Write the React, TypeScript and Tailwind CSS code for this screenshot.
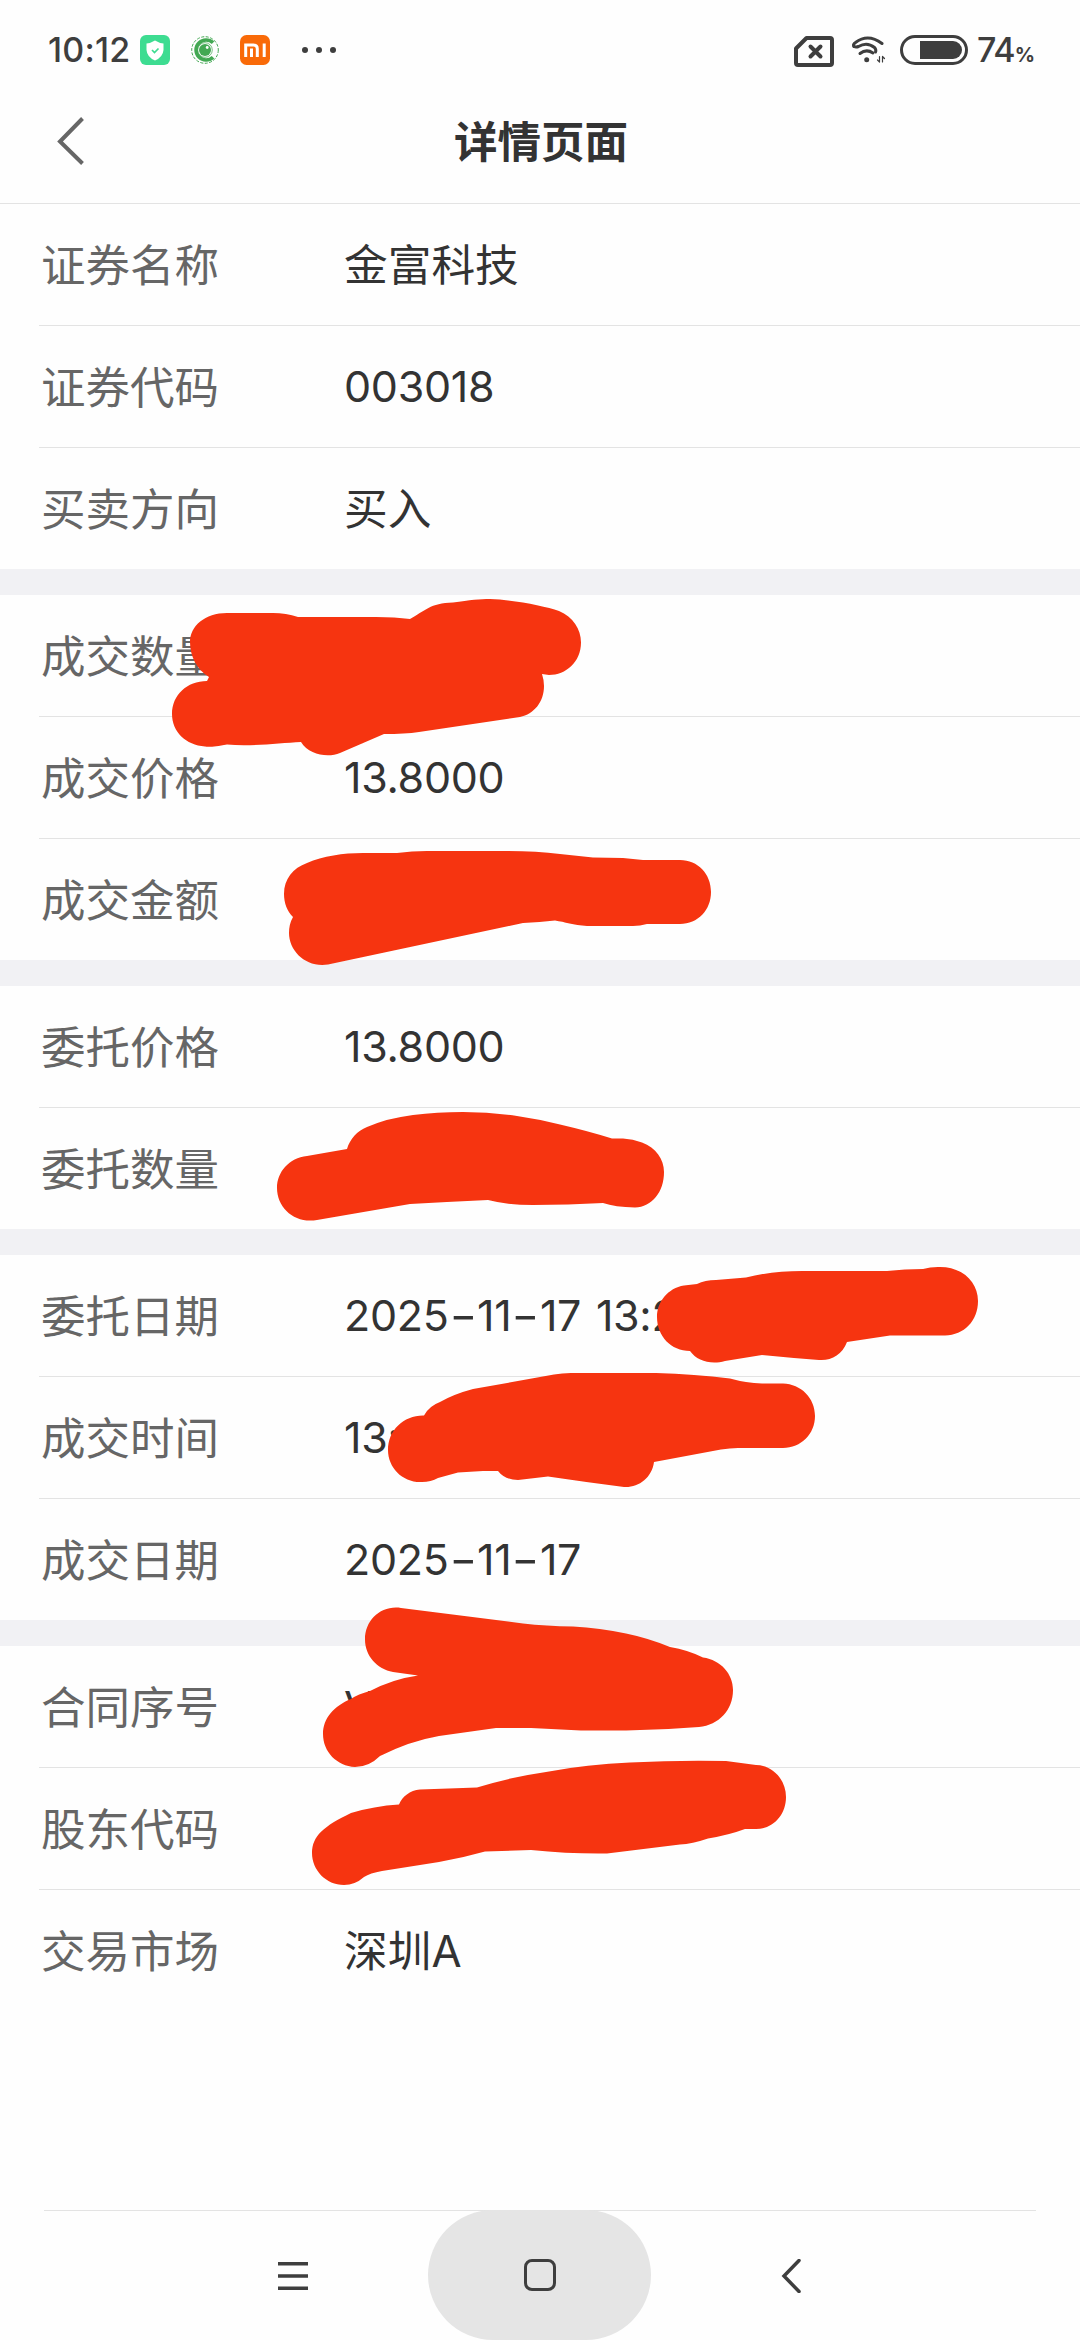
import React from "react";
import clsx from "clsx";

type Row = { label: string; value?: string; latin?: boolean };

const sections: Row[][] = [
  [
    { label: "证券名称", value: "金富科技" },
    { label: "证券代码", value: "003018", latin: true },
    { label: "买卖方向", value: "买入" },
  ],
  [
    { label: "成交数量" },
    { label: "成交价格", value: "13.8000", latin: true },
    { label: "成交金额" },
  ],
  [
    { label: "委托价格", value: "13.8000", latin: true },
    { label: "委托数量" },
  ],
  [
    { label: "委托日期", value: "2025-11-17 13:2", latin: true },
    { label: "成交时间", value: "13:", latin: true },
    { label: "成交日期", value: "2025-11-17", latin: true },
  ],
  [
    { label: "合同序号", value: "V", latin: true },
    { label: "股东代码" },
    { label: "交易市场", value: "深圳A" },
  ],
];

// marker strokes, in page coordinates
const scribbles = [
  "M209 677C197 670 190 656 190 642C190 626 205 613 227 613H273Q286 613 298 617H376Q395 617 410 619C425 611 430 603 453 602.5C470 600 480 599 490 599C515 600 545 606 559 611C573 617 581 629 581 642.5C581 662 566 675 549 675L542 674Q544 680 544 686C544 702 534 714 520 717L419 732Q405 734 384 734L340 753C328 758 309 755 301 742C280 743 250 747 227 744.5C215 747 208 747 205 746.5C186 745 172 732 172 714C172 695 187 681 207 681Z",
  "M293 917C287 911 284 903 284 894C284 879 293 868 307 863C323 856 343 853 363 853H397Q412 851 427 851H503Q535 851 560 854L593 857.5L623 858L643 860H680C698 860 711 874 711 892C711 910 698 924 680 924H647Q640 926 633 926H587C573 925 565 922 555 920.5Q540 922 523 923L328 964.5C306 968 289 951 289 933Q289 924 293 917Z",
  "M347 1149C350 1139 357 1131 367 1127Q388 1118 413 1115Q437 1112 463 1112Q490 1112 517 1116Q538 1119 560 1124.5Q588 1131 612 1138.5H623Q633 1139 642 1142.5C656 1148 664 1159 664 1172C664 1192 652 1207 635 1207.5Q615 1207 603 1203Q568 1205 533 1205Q507 1205 488 1200L447 1202L410 1204L317 1220C295 1224 277 1208 277 1188C277 1172 289 1158 307 1156Z",
  "M690 1351C671 1351 657 1336 657 1317C657 1302 668 1288 684 1285.5L697 1284Q705 1280 716 1280L746 1277.5Q772 1271 802 1271H887Q905 1269 923 1269Q930 1267 938 1267C961 1266 978 1281 978 1301C978 1321 964 1335 945 1335.5H890L847 1342C842 1355 831 1361 819 1360Q792 1358 762 1355L725 1361C711 1365 697 1361 690 1351Z",
  "M424 1415.5Q429 1406 440 1402Q454 1394 473 1389L554 1374.5Q562 1373 571 1373H656Q695 1374 730 1378.5Q746 1383 762 1383.5H783C801 1384 815 1398 815 1416C815 1434 801 1448 783 1448H738Q730 1448 721 1449.5L654 1462C652 1478 638 1488 624 1487Q585 1482 548 1476.5L518 1480Q505 1480 498 1471H483L458 1472.5L438 1478Q431 1482 422 1482C403 1483 388 1468 388 1450C388 1430 404 1415 424 1415.5Z",
  "M418 1675.5L393 1672C377 1669 365 1656 365 1639.5C365 1620 381 1605 401 1608L523 1623.5Q546 1626 573 1626.5Q600 1628 626 1633.5Q648 1638 670 1647Q688 1650 703 1657.5C721 1660 733 1674 733 1690C733 1710 719 1725 699 1727Q663 1730 626 1730.5H581L531 1728H496L439 1736Q410 1741 380 1756Q369 1767 355 1767C337 1766 323 1752 323 1734C323 1718 334 1706 351 1699Q358 1694 370 1691Q393 1679 418 1675.5Z",
  "M399 1804.5C402 1797 410 1790 420 1789.5L477 1787.5Q511 1777 546 1772Q588 1764 630 1762.5Q678 1760 726 1761L756 1765C773 1765 786 1780 786 1797C786 1815 773 1829 756 1829H745Q729 1835 708 1838.5Q692 1844 680 1844.5L607 1853.5Q570 1854 531 1850L485 1851.5Q462 1858 439 1862L382 1871Q370 1873 364 1877Q355 1885 344 1885C326 1885 312 1870 312 1853C312 1836 324 1826 351 1813Q374 1806 399 1804.5Z",
];

const StatusBar = () => (
  <div className="flex h-[99px] items-center justify-between pr-[46px] pl-12 text-[#3e3e3e]">
    <div className="flex items-center">
      <span className="w-[92px] font-['Inter'] text-[34px] leading-none font-medium tracking-[0.2px] whitespace-nowrap">
        10:12
      </span>
      <svg width="30" height="30" viewBox="0 0 30 30">
        <rect width="30" height="30" rx="6" fill="#3ddc91" />
        <path d="M15 5.5Q19 8 23.5 8.5V15Q23 22 15 25.5Q7 22 6.5 15V8.5Q11 8 15 5.5Z" fill="#fff" />
        <path d="m12 15 2.5 2.5 4-4" fill="none" stroke="#3ddc91" strokeWidth="1.7" />
      </svg>
      <svg className="ml-5" width="30" height="30" viewBox="0 0 30 30" fill="none">
        <circle cx="15" cy="15" r="13.3" stroke="#43a853" strokeDasharray="3 1.5" />
        <path d="M23 7.8A10 10 0 1 0 23 22.2" stroke="#43a853" strokeWidth="3.6" />
        <circle cx="15" cy="15" r="6" fill="#43a853" />
        <circle cx="15" cy="15" r="7.3" stroke="#43a853" strokeWidth=".7" />
        <circle cx="17.2" cy="12.5" r="1.4" fill="#fff" />
      </svg>
      <svg className="ml-5" width="30" height="30" viewBox="0 0 30 30" fill="none">
        <rect width="30" height="30" rx="6.5" fill="#f96a08" />
        <path d="M5.7 22V10H13.5Q17.3 10 17.3 13.8V22M11.5 13.5V22M24.2 8.5V22" stroke="#fff" strokeWidth="3" />
      </svg>
      <svg className="ml-8" width="34" height="6" viewBox="0 0 34 6" fill="currentColor">
        <circle cx="3" cy="3" r="3" />
        <circle cx="17" cy="3" r="3" />
        <circle cx="31" cy="3" r="3" />
      </svg>
    </div>
    <div className="flex items-center">
      <svg className="mt-[3px]" width="40" height="31" viewBox="0 0 40 31" fill="none" stroke="currentColor" strokeWidth="4">
        <path d="M12.5 2H36Q38 2 38 4V27Q38 29 36 29H4Q2 29 2 27V12.5Z" strokeLinejoin="round" />
        <path d="m16.5 10.5 10 10m0-10-10 10" strokeLinecap="round" />
      </svg>
      <svg className="ml-[17px]" width="35" height="28" viewBox="0 0 35 28" fill="none" stroke="currentColor" strokeWidth="3" strokeLinecap="round">
        <path d="M3 10.5Q1.5 8.5 4.5 6.5Q17-3 31 7.5" />
        <path d="M3 10.5Q5 11.5 7.5 10.5Q16 5.5 23.5 11.5Q25.5 14 24.5 16" />
        <path d="M9 17.5Q15.5 12.5 22 17" />
        <circle cx="15.7" cy="23.8" r="2.5" fill="currentColor" stroke="none" />
        <path d="M28.5 20.5V26M28.5 26l-2-2M31.5 26V20.5M31.5 20.5l2 2" strokeWidth="1.2" />
      </svg>
      <div className="ml-[14px] flex h-[30px] w-[68px] items-center justify-end rounded-full border-3 border-[#3e3e3e] pr-[3px]">
        <div className="h-[18px] w-[42px] rounded-l-[1px] rounded-r-full bg-[#3e3e3e]" />
      </div>
      <span className="ml-[9px] font-['Inter'] text-[34px] leading-none font-medium tracking-[-1px]">
        74<span className="text-[20px] font-bold">%</span>
      </span>
    </div>
  </div>
);

const Header = () => (
  <header className="flex h-[105px] items-start border-b border-[#e3e3e3]">
    <svg className="mt-[18px] ml-[57px] w-[28px]" height="48" viewBox="0 0 28 48" fill="none">
      <path d="M25.5 1.5 3 24.5l22.5 22" stroke="#666" strokeWidth="4" />
    </svg>
    <h1 className="mt-[11px] mr-[83px] flex-1 text-center text-[43.5px] leading-[64px] font-bold text-[#333]">
      详情页面
    </h1>
  </header>
);

// dashes in dates are drawn wider than the font's own hyphen
const LatinValue = ({ text }: { text: string }) => (
  <>
    {text.split("-").map((part, i) => (
      <React.Fragment key={i}>
        {i > 0 && <span className="inline-block w-[28.5px] scale-x-140 text-center">-</span>}
        {part}
      </React.Fragment>
    ))}
  </>
);

const DetailRow = ({ row, last }: { row: Row; last: boolean }) => (
  <div
    className={clsx(
      "ml-[39px] flex items-center",
      last ? "h-[121px]" : "h-[122px] border-b border-[#e3e3e3]",
    )}
  >
    <span className="w-[305px] pt-[3px] pl-[2px] text-[44.5px] leading-[64px] text-[#666]">
      {row.label}
    </span>
    <span
      className={clsx(
        "leading-[64px] whitespace-pre text-[#333]",
        row.latin
          ? "pb-[2px] text-[43px] tracking-[-0.3px] [word-spacing:3px]"
          : "pt-[2px] text-[43.7px]",
      )}
    >
      {row.latin ? <LatinValue text={row.value ?? ""} /> : row.value}
    </span>
  </div>
);

const NavBar = () => (
  <nav className="mx-11 flex h-[130px] border-t border-[#e3e3e3] text-[#3e3e3e]">
    <div className="flex w-[384px] items-center justify-end pr-[120px]">
      <svg width="30" height="28" viewBox="0 0 30 28" fill="currentColor">
        <path d="M0 0h30v3.5H0zM0 12.2h30v3.5H0zM0 24.4h30v3.5H0z" />
      </svg>
    </div>
    <div className="-mt-px flex h-[130px] w-[223px] items-center justify-center rounded-full bg-[#e5e5e5]">
      <div className="h-8 w-8 rounded-[8px] border-[3.5px] border-[#3e3e3e]" />
    </div>
    <div className="flex flex-1 items-center pl-[130px]">
      <svg width="20" height="34" viewBox="0 0 20 34" fill="none" stroke="currentColor" strokeWidth="3.5">
        <path d="M18 1.5 3 17l15 15.5" strokeLinecap="round" />
      </svg>
    </div>
  </nav>
);

export default function App() {
  return (
    <div className="relative flex h-[2340px] w-[1080px] flex-col overflow-hidden bg-[#fefefe] font-['Inter','Noto_Sans_CJK_SC',sans-serif]">
      <StatusBar />
      <Header />
      <main className="flex flex-1 flex-col">
        {sections.map((rows, idx) => (
          <section
            key={idx}
            className={clsx(idx < sections.length - 1 && "border-b-[26px] border-[#f1f1f4]")}
          >
            {rows.map((row, i) => (
              <DetailRow key={row.label} row={row} last={i === rows.length - 1} />
            ))}
          </section>
        ))}
      </main>
      <NavBar />
      <svg
        className="pointer-events-none absolute inset-0"
        width="1080"
        height="2340"
        viewBox="0 0 1080 2340"
        fill="#f63410"
      >
        {scribbles.map((d) => (
          <path key={d} d={d} />
        ))}
      </svg>
    </div>
  );
}
